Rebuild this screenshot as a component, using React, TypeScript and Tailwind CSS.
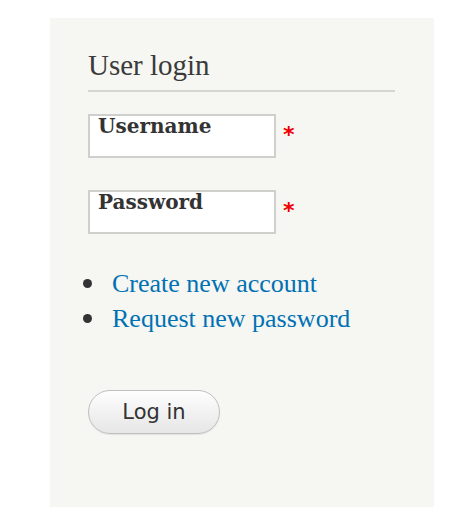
import React from 'react';

const serif = { fontFamily: '"Liberation Serif", serif' };

function Field({ label }: { label: string }) {
  return (
    <div className="flex items-start">
      <div className="w-[188px] h-[44px] border-2 border-[#cfcfcb] bg-white pl-[8px]">
        <span className="block text-[20px] leading-none font-bold text-[#333] [font-family:'DejaVu_Serif',serif]">
          {label}
        </span>
      </div>
      <span className="ml-[7px] mt-[10px] text-[22px] leading-none font-bold text-[#e00] [font-family:'DejaVu_Sans',sans-serif]">
        *
      </span>
    </div>
  );
}

export default function App() {
  return (
    <div className="w-full h-[512px] bg-white pt-[18px]">
      <div className="ml-[50px] w-[384px] h-[489px] bg-[#f6f6f2] pt-[33px] pl-[38px] pr-[39px]">
        <h2
          className="text-[29px] leading-none text-[#3a3a3a] pb-[10px] border-b-2 border-[#d6d6d1]"
          style={serif}
        >
          User login
        </h2>
        <div className="mt-[22px] flex flex-col gap-[32px]">
          <Field label="Username" />
          <Field label="Password" />
        </div>
        <ul className="mt-[32px] flex flex-col text-[26px] leading-[35px] text-[#0071b3]" style={serif}>
          {['Create new account', 'Request new password'].map((item) => (
            <li key={item} className="flex items-center">
              <span className="-ml-[5px] mr-[20px] w-[9px] h-[9px] rounded-full bg-[#333] shrink-0" />
              <a href="#" className="text-[#0071b3]">
                {item}
              </a>
            </li>
          ))}
        </ul>
        <button className="mt-[54px] w-[132px] h-[44px] rounded-full border border-[#c0c0c0] bg-gradient-to-b from-[#fefefe] to-[#e6e6e6] text-[21px] leading-none text-[#333] [font-family:'DejaVu_Sans',sans-serif] shadow-[0_1px_1px_rgba(0,0,0,0.08)]">
          Log in
        </button>
      </div>
    </div>
  );
}
